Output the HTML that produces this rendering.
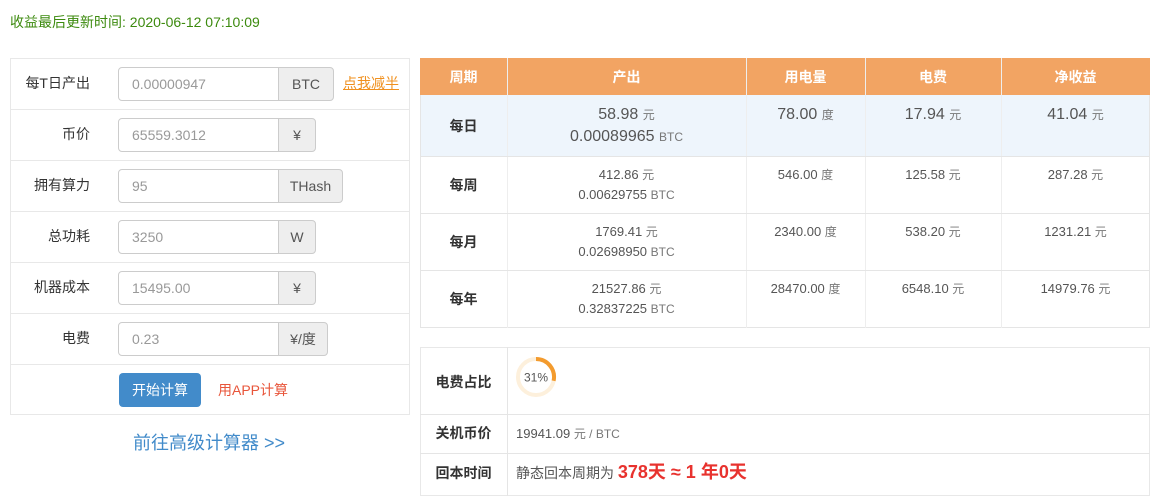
<!DOCTYPE html>
<html><head><meta charset="utf-8"><style>
*{margin:0;padding:0;box-sizing:border-box}
body{width:1157px;height:500px;background:#fff;font-family:"Liberation Sans","Noto Sans CJK SC",sans-serif;color:#333;position:relative;overflow:hidden;font-size:14px}
.a{position:absolute}
.lbl{position:absolute;right:1067px;width:90px;text-align:right;font-size:14px;color:#333}
.inp{position:absolute;left:118px;width:161px;height:34px;border:1px solid #ccc;border-radius:4px 0 0 4px;padding-left:13px;line-height:32px;color:#999;font-size:14px}
.add{position:absolute;left:278px;height:34px;border:1px solid #ccc;border-radius:0 4px 4px 0;background:#eee;line-height:32px;text-align:center;color:#555;font-size:14px}
.hl{position:absolute;left:10px;width:400px;height:1px;background:#e8e8e8}
.vl{position:absolute;width:1px;background:#e5e5e5}
.rh{position:absolute;height:1px;background:#e5e5e5}
.c{position:absolute;text-align:center;color:#555;font-size:13px;line-height:20px}
.u{font-size:12px;color:#777}
.th{position:absolute;top:59px;height:36px;line-height:36px;text-align:center;color:#fff;font-weight:bold;font-size:14px}
.b{font-weight:bold;color:#333}
</style></head><body>
<div class="a" style="left:10px;top:12px;color:#3c8a0e;font-size:14px;line-height:20px">收益最后更新时间: 2020-06-12 07:10:09</div>

<div class="a" style="left:10px;top:58px;width:400px;height:357px;border:1px solid #e8e8e8"></div>
<div class="hl" style="top:109px"></div><div class="hl" style="top:160px"></div><div class="hl" style="top:211px"></div><div class="hl" style="top:262px"></div><div class="hl" style="top:313px"></div><div class="hl" style="top:364px"></div>

<div class="lbl" style="top:73px">每T日产出</div>
<div class="inp" style="top:67px">0.00000947</div><div class="add" style="top:67px;width:56px">BTC</div>
<div class="a" style="left:343px;top:73px;color:#f0901e;text-decoration:underline">点我减半</div>

<div class="lbl" style="top:124px">币价</div>
<div class="inp" style="top:118px">65559.3012</div><div class="add" style="top:118px;width:38px">¥</div>

<div class="lbl" style="top:175px">拥有算力</div>
<div class="inp" style="top:169px">95</div><div class="add" style="top:169px;width:65px">THash</div>

<div class="lbl" style="top:226px">总功耗</div>
<div class="inp" style="top:220px">3250</div><div class="add" style="top:220px;width:38px">W</div>

<div class="lbl" style="top:277px">机器成本</div>
<div class="inp" style="top:271px">15495.00</div><div class="add" style="top:271px;width:38px">¥</div>

<div class="lbl" style="top:328px">电费</div>
<div class="inp" style="top:322px">0.23</div><div class="add" style="top:322px;width:50px">¥/度</div>

<div class="a" style="left:119px;top:373px;width:82px;height:34px;background:#428bca;border-radius:4px;color:#fff;text-align:center;line-height:34px">开始计算</div>
<div class="a" style="left:218px;top:380px;color:#e8553a">用APP计算</div>
<div class="a" style="left:133px;top:432px;color:#428bca;font-size:18px;line-height:22px">前往高级计算器 &gt;&gt;</div>

<!-- top table -->
<div class="a" style="left:420px;top:58px;width:730px;height:270px;border:1px solid #e5e5e5"></div>
<div class="a" style="left:420px;top:58px;width:730px;height:37px;background:#f2a463"></div>
<div class="a" style="left:421px;top:95px;width:728px;height:61px;background:#eef5fc"></div>
<div class="th" style="left:420px;width:87px">周期</div>
<div class="th" style="left:507px;width:239px">产出</div>
<div class="th" style="left:746px;width:119px">用电量</div>
<div class="th" style="left:865px;width:136px">电费</div>
<div class="th" style="left:1001px;width:149px">净收益</div>
<div class="vl" style="left:507px;top:58px;height:270px;background:#eee"></div>
<div class="vl" style="left:746px;top:58px;height:270px;background:#eee"></div>
<div class="vl" style="left:865px;top:58px;height:270px;background:#eee"></div>
<div class="vl" style="left:1001px;top:58px;height:270px;background:#eee"></div>
<div class="rh" style="left:420px;top:156px;width:730px"></div>
<div class="rh" style="left:420px;top:213px;width:730px"></div>
<div class="rh" style="left:420px;top:270px;width:730px"></div>

<div class="c b" style="left:420px;width:87px;top:116px;font-size:14px">每日</div>
<div class="c" style="left:507px;width:239px;top:104px;font-size:16px;line-height:21px">58.98 <span class="u">元</span><br>0.00089965 <span class="u">BTC</span></div>
<div class="c" style="left:746px;width:119px;top:104px;font-size:16px;line-height:21px">78.00 <span class="u">度</span></div>
<div class="c" style="left:865px;width:136px;top:104px;font-size:16px;line-height:21px">17.94 <span class="u">元</span></div>
<div class="c" style="left:1001px;width:149px;top:104px;font-size:16px;line-height:21px">41.04 <span class="u">元</span></div>

<div class="c b" style="left:420px;width:87px;top:175px;font-size:14px">每周</div>
<div class="c" style="left:507px;width:239px;top:165px">412.86 <span class="u">元</span><br>0.00629755 <span class="u">BTC</span></div>
<div class="c" style="left:746px;width:119px;top:165px">546.00 <span class="u">度</span></div>
<div class="c" style="left:865px;width:136px;top:165px">125.58 <span class="u">元</span></div>
<div class="c" style="left:1001px;width:149px;top:165px">287.28 <span class="u">元</span></div>

<div class="c b" style="left:420px;width:87px;top:232px;font-size:14px">每月</div>
<div class="c" style="left:507px;width:239px;top:222px">1769.41 <span class="u">元</span><br>0.02698950 <span class="u">BTC</span></div>
<div class="c" style="left:746px;width:119px;top:222px">2340.00 <span class="u">度</span></div>
<div class="c" style="left:865px;width:136px;top:222px">538.20 <span class="u">元</span></div>
<div class="c" style="left:1001px;width:149px;top:222px">1231.21 <span class="u">元</span></div>

<div class="c b" style="left:420px;width:87px;top:289px;font-size:14px">每年</div>
<div class="c" style="left:507px;width:239px;top:279px">21527.86 <span class="u">元</span><br>0.32837225 <span class="u">BTC</span></div>
<div class="c" style="left:746px;width:119px;top:279px">28470.00 <span class="u">度</span></div>
<div class="c" style="left:865px;width:136px;top:279px">6548.10 <span class="u">元</span></div>
<div class="c" style="left:1001px;width:149px;top:279px">14979.76 <span class="u">元</span></div>

<!-- bottom table -->
<div class="a" style="left:420px;top:347px;width:730px;height:149px;border:1px solid #e8e8e8"></div>
<div class="vl" style="left:507px;top:347px;height:149px"></div>
<div class="rh" style="left:420px;top:414px;width:730px"></div>
<div class="rh" style="left:420px;top:453px;width:730px"></div>
<div class="c b" style="left:420px;width:87px;top:372px;font-size:14px">电费占比</div>
<svg class="a" style="left:515px;top:356px" width="42" height="42" viewBox="0 0 42 42">
<circle cx="21" cy="21" r="18" fill="none" stroke="#fdf0dc" stroke-width="4"/>
<path d="M21 3 A18 18 0 0 1 38.6 24.8" fill="none" stroke="#f39b2e" stroke-width="4"/>
<text x="21" y="25.5" text-anchor="middle" font-size="12" fill="#555" font-family="Liberation Sans">31%</text>
</svg>
<div class="c b" style="left:420px;width:87px;top:423px;font-size:14px">关机币价</div>
<div class="a" style="left:516px;top:424px;color:#555;font-size:13px;line-height:20px">19941.09 <span class="u">元 / BTC</span></div>
<div class="c b" style="left:420px;width:87px;top:463px;font-size:14px">回本时间</div>
<div class="a" style="left:516px;top:460px;color:#555;font-size:14px;line-height:24px">静态回本周期为 <span style="color:#e8322e;font-size:18px;font-weight:bold">378天 ≈ 1 年0天</span></div>
</body></html>
